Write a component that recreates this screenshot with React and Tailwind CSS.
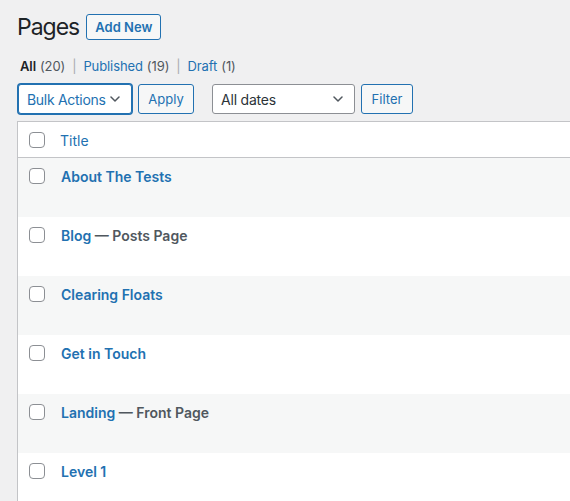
import React from "react";

function Chevron({ color = "#50575e" }) {
  return (
    <svg width="10" height="6" viewBox="0 0 10 6" className="shrink-0">
      <polyline points="1,1 5,5 9,1" fill="none" stroke={color} strokeWidth="1.5" strokeLinecap="round" strokeLinejoin="round" />
    </svg>
  );
}

function Checkbox() {
  return <div className="w-4 h-4 rounded-[4px] border border-[#8c8f94] bg-white shrink-0" />;
}

const rows = [
  { t: "About The Tests" },
  { t: "Blog", s: "Posts Page" },
  { t: "Clearing Floats" },
  { t: "Get in Touch" },
  { t: "Landing", s: "Front Page" },
  { t: "Level 1" },
];

export default function App() {
  return (
    <div
      className="w-[570px] h-[501px] overflow-hidden bg-[#f0f0f1] text-[#3c434a]"
      style={{ fontFamily: "Inter, 'Noto Sans', Arial, sans-serif" }}
    >
      <div className="flex items-center pl-[17px] pt-[14px] h-[40px]">
        <h1 className="text-[23px] leading-[26px] text-[#1d2327] font-normal tracking-[-1px]">Pages</h1>
        <button className="ml-[7px] h-[26px] px-[8px] border border-[#2271b1] rounded-[3px] bg-[#f6f7f7] text-[#2271b1] text-[13px] font-semibold leading-none">
          Add New
        </button>
      </div>

      <div className="flex items-center pl-[20px] mt-[17px] h-[18px] text-[13px] leading-[18px] tracking-[-0.1px]">
        <span className="font-semibold text-[#1d2327]">All</span>
        <span className="ml-[4px] text-[#50575e]">(20)</span>
        <span className="mx-[7px] text-[#a7aaad]">|</span>
        <span className="text-[#2271b1]">Published</span>
        <span className="ml-[4px] text-[#50575e]">(19)</span>
        <span className="mx-[7px] text-[#a7aaad]">|</span>
        <span className="text-[#2271b1]">Draft</span>
        <span className="ml-[4px] text-[#50575e]">(1)</span>
      </div>

      <div className="flex items-center pl-[18px] mt-[9px] h-[30px]">
        <div className="w-[114px] h-[30px] flex items-center justify-between pl-[8px] pr-[11px] bg-white border border-[#2271b1] rounded-[3px] shadow-[0_0_0_1px_#2271b1] text-[#2271b1] text-[14px] tracking-[-0.3px]">
          <span>Bulk Actions</span>
          <Chevron color="#50575e" />
        </div>
        <button className="ml-[6px] w-[56px] h-[30px] border border-[#2271b1] rounded-[3px] bg-[#f6f7f7] text-[#2271b1] text-[13px] leading-none">
          Apply
        </button>
        <div className="ml-[18px] w-[143px] h-[30px] flex items-center justify-between pl-[8px] pr-[11px] bg-white border border-[#8c8f94] rounded-[3px] text-[#2c3338] text-[14px] tracking-[-0.2px]">
          <span>All dates</span>
          <Chevron color="#50575e" />
        </div>
        <button className="ml-[6px] w-[52px] h-[30px] border border-[#2271b1] rounded-[3px] bg-[#f6f7f7] text-[#2271b1] text-[13px] leading-none">
          Filter
        </button>
      </div>

      <div className="ml-[17px] mt-[7px] w-[700px] border border-[#c3c4c7] bg-white">
        <div className="flex h-[36px] border-b border-[#c3c4c7]">
          <div className="w-[42px] pl-[11px] pt-[10px]">
            <Checkbox />
          </div>
          <div className="pt-[9px] text-[14px] leading-[20px] text-[#2271b1]">Title</div>
        </div>
        {rows.map((r, i) => (
          <div key={r.t} className={"flex h-[59px] " + (i % 2 === 0 ? "bg-[#f6f7f7]" : "bg-white")}>
            <div className="w-[43px] pl-[11px] pt-[10px]">
              <Checkbox />
            </div>
            <div className="pt-[9px] text-[14px] leading-[20px] font-semibold">
              <span className="text-[#2271b1]">{r.t}</span>
              {r.s && <span className="text-[#50575e]"> — {r.s}</span>}
            </div>
          </div>
        ))}
      </div>
    </div>
  );
}
